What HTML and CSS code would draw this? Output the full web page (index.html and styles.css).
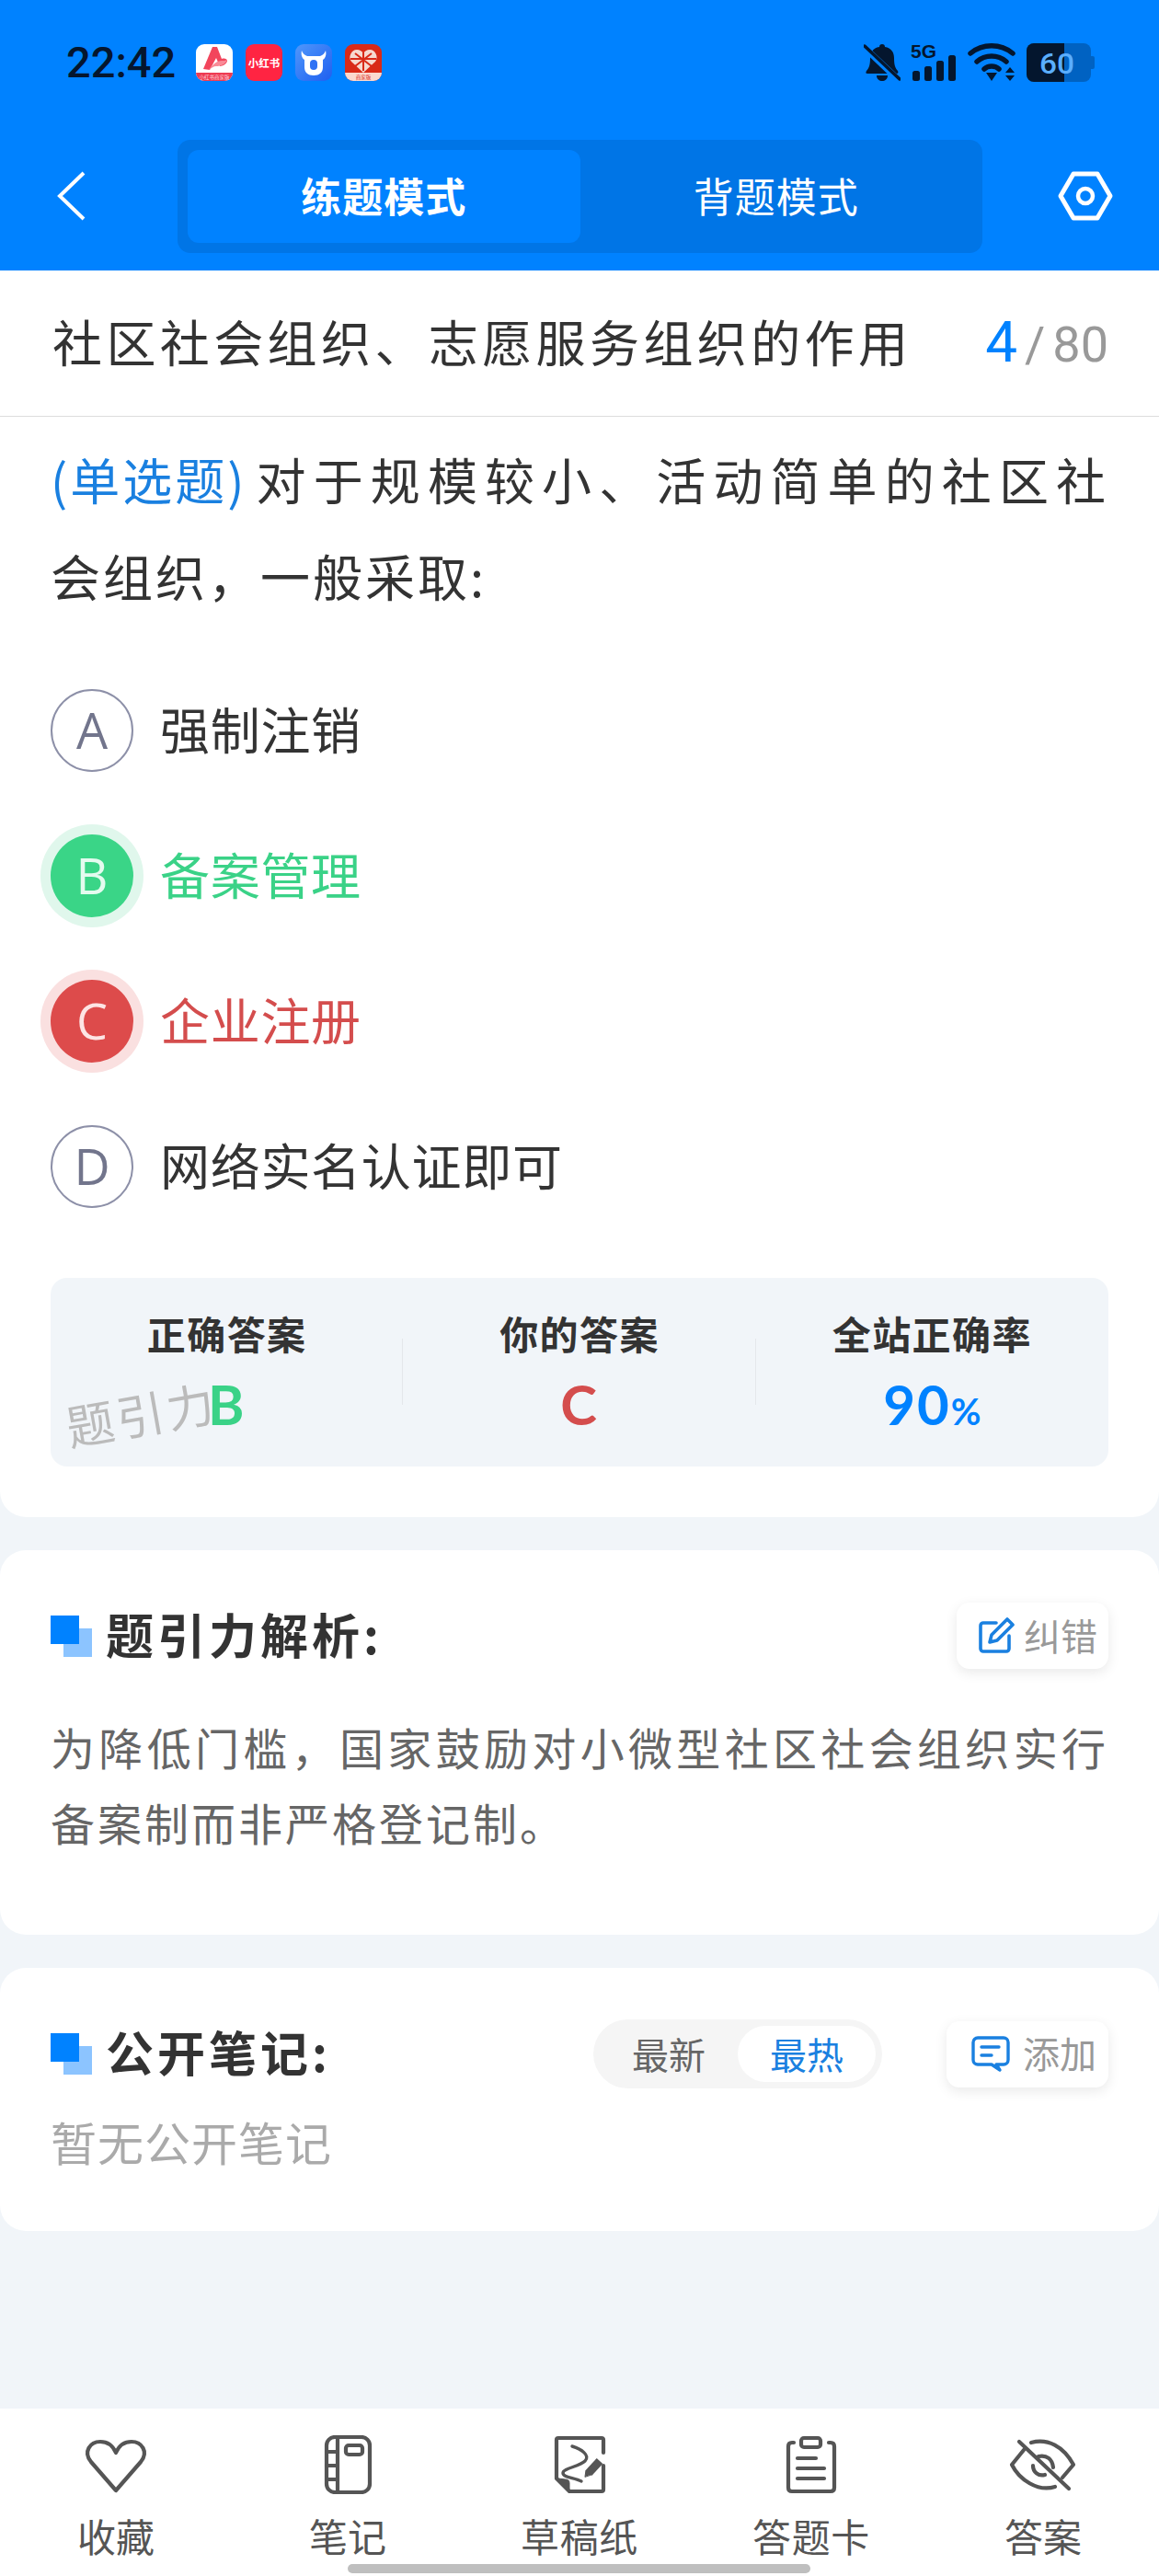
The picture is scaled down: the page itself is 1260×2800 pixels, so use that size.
FILE: index.html
```html
<!DOCTYPE html>
<html lang="zh-CN">

<head>
    <meta charset="UTF-8">
    <meta name="viewport" content="width=device-width, initial-scale=1.0">
    <title>题引力</title>
    <link rel="stylesheet" href="styles.css">
</head>

<body>
    <header class="topArea">
        <div class="statusBar">
            <div class="statusLeft">
                <span class="clock">22:42</span>
                <div class="appIcons">
                    <svg class="appIcon" viewBox="0 0 40 40">
                        <rect width="40" height="40" rx="9" fill="#fff"/>
                        <path d="M0 31H40a9 9 0 0 1-9 9H9a9 9 0 0 1-9-9Z" fill="#ee3b52"/>
                        <path d="M8 27 18 3h5l5 13c3-1 6 0 6 2 0 3-5 6-8 6l-4-9-7 13Z" fill="#f2455c"/>
                        <path d="M14 28c4-6 9-10 14-10 2 0 4 0 6-1-2 5-7 7-12 7-3 0-5 2-8 4Z" fill="#f98a96"/>
                        <text class="tinyText" x="20" y="37.5" fill="#ffd6dc">小红书商家版</text>
                    </svg>
                    <svg class="appIcon" viewBox="0 0 40 40">
                        <rect width="40" height="40" rx="9" fill="#ff2442"/>
                        <text class="brandText" x="20" y="25" fill="#fff">小红书</text>
                    </svg>
                    <svg class="appIcon" viewBox="0 0 40 40">
                        <defs>
                            <linearGradient id="cowBg" x1="0" y1="0" x2="1" y2="1">
                                <stop offset="0" stop-color="#4f97fb"/>
                                <stop offset="1" stop-color="#1f5ff0"/>
                            </linearGradient>
                        </defs>
                        <rect width="40" height="40" rx="9" fill="url(#cowBg)"/>
                        <path d="M7 7c1 3 3 5 6 6h14c3-1 5-3 6-6 1 4 0 8-3 10v8c0 6-4 9-10 9s-10-3-10-9v-8c-3-2-4-6-3-10Z" fill="#fff"/>
                        <rect x="16" y="17" width="8" height="11" rx="4" fill="#2f72f4"/>
                    </svg>
                    <svg class="appIcon" viewBox="0 0 40 40">
                        <rect width="40" height="40" rx="9" fill="#d92a18"/>
                        <path d="M20 31 7 19c-4-5 0-13 6-13 3 0 6 2 7 4 1-2 4-4 7-4 6 0 10 8 6 13Z" fill="#f6d9cf"/>
                        <path d="M20 9v20M11 10l18 14M29 10 11 24M6 16h28" stroke="#d92a18" stroke-width="2" fill="none"/>
                        <path d="M0 31H40a9 9 0 0 1-9 9H9a9 9 0 0 1-9-9Z" fill="#fbd9cf"/>
                        <text class="tinyText" x="20" y="38" fill="#d92a18">商家版</text>
                    </svg>
                </div>
            </div>
            <div class="statusRight">
                <svg class="statusBell" viewBox="0 0 40 42">
                    <path d="M20 1c2 0 3 1 3 3 7 1 10 6 10 12 0 7 1 11 4 14 1 2 0 3-1 3H4c-2 0-2-1-1-3 3-3 4-7 4-14 0-6 3-11 10-12 0-2 1-3 3-3Z" fill="#04162e"/>
                    <path d="M14 35h12c0 4-3 6-6 6s-6-2-6-6Z" fill="#04162e"/>
                    <path d="M0 4 39 41" stroke="#0082ff" stroke-width="7"/>
                    <path d="M1 3 39 39" stroke="#04162e" stroke-width="3.5" stroke-linecap="round"/>
                </svg>
                <svg class="statusSignal" viewBox="0 -6 50 48">
                    <text class="fiveG" x="0" y="16" textLength="28" lengthAdjust="spacingAndGlyphs">5G</text>
                    <rect x="2" y="30" width="8" height="11" rx="2.5" fill="#04162e"/>
                    <rect x="15" y="25" width="8" height="16" rx="2.5" fill="#04162e"/>
                    <rect x="28" y="19" width="8" height="22" rx="2.5" fill="#04162e"/>
                    <rect x="41" y="13" width="8" height="28" rx="2.5" fill="#04162e"/>
                </svg>
                <svg class="statusWifi" viewBox="0 0 52 42">
                    <path d="M3 11C16 0 36 0 49 11" stroke="#04162e" stroke-width="5.5" fill="none" stroke-linecap="round"/>
                    <path d="M10 20C19 12 33 12 42 20" stroke="#04162e" stroke-width="5.5" fill="none" stroke-linecap="round"/>
                    <path d="M18 28C22 24 30 24 34 28" stroke="#04162e" stroke-width="5.5" fill="none" stroke-linecap="round"/>
                    <path d="M20 32H32L26 41Z" fill="#04162e"/>
                    <path d="M41 32H51L46 26ZM41 35H51L46 41Z" fill="#04162e"/>
                </svg>
                <svg class="statusBattery" viewBox="0 0 74 42">
                    <rect x="0" y="0" width="70" height="42" rx="8" fill="#0062c2"/>
                    <path d="M8 0H41V42H8a8 8 0 0 1-8-8V8a8 8 0 0 1 8-8Z" fill="#04162e"/>
                    <path d="M70 14h2a2 2 0 0 1 2 2v10a2 2 0 0 1-2 2h-2Z" fill="#0062c2"/>
                    <text class="batteryText" x="33" y="33" textLength="38" lengthAdjust="spacingAndGlyphs">60</text>
                </svg>
            </div>
        </div>
        <nav class="navBar">
            <svg class="backIcon" viewBox="0 0 32 54">
                <path d="M29 2 3 27 29 52" stroke="#fff" stroke-width="4" fill="none"/>
            </svg>
            <div class="modeSwitch">
                <div class="modeTab modeActive">练题模式</div>
                <div class="modeTab">背题模式</div>
            </div>
            <svg class="hexIcon" viewBox="0 0 60 54">
                <path d="M3 27 17 3H43L57 27 43 51H17Z" stroke="#fff" stroke-width="5" fill="none" stroke-linejoin="round"/>
                <circle cx="30" cy="27" r="8" stroke="#fff" stroke-width="4.5" fill="none"/>
            </svg>
        </nav>
    </header>

    <main class="pageBody">
        <section class="card questionCard">
            <div class="topicRow">
                <h1 class="topicTitle">社区社会组织、志愿服务组织的作用</h1>
                <div class="counter"><span class="counterNow">4</span><span class="counterSlash">/</span><span class="counterAll">80</span></div>
            </div>
            <div class="questionBox">
                <p class="questionText">
                    <span class="lineFull"><span class="qType">(单选题)</span>对于规模较小、活动简单的社区社</span>
                    <span class="lineLast">会组织，一般采取:</span>
                </p>
                <ul class="optionList">
                    <li class="option"><span class="optionMark">A</span><span class="optionText">强制注销</span></li>
                    <li class="option optionRight"><span class="optionMark">B</span><span class="optionText">备案管理</span></li>
                    <li class="option optionWrong"><span class="optionMark">C</span><span class="optionText">企业注册</span></li>
                    <li class="option"><span class="optionMark">D</span><span class="optionText">网络实名认证即可</span></li>
                </ul>
                <div class="statsBox">
                    <div class="statCell">
                        <div class="statLabel">正确答案</div>
                        <div class="statValue valueRight">B</div>
                    </div>
                    <div class="statLine"></div>
                    <div class="statCell">
                        <div class="statLabel">你的答案</div>
                        <div class="statValue valueWrong">C</div>
                    </div>
                    <div class="statLine"></div>
                    <div class="statCell">
                        <div class="statLabel">全站正确率</div>
                        <div class="statValue valueRate">90<small>%</small></div>
                    </div>
                    <div class="watermark">题引力</div>
                </div>
            </div>
        </section>

        <section class="card analysisCard">
            <div class="cardHead">
                <svg class="headMark" viewBox="0 0 45 45">
                    <rect x="14" y="14" width="31" height="31" fill="#8cc4ff"/>
                    <rect width="31" height="31" fill="#0082ff"/>
                </svg>
                <h2 class="headTitle">题引力解析:</h2>
                <button class="smallBtn">
                    <svg class="btnIcon" viewBox="0 0 40 40">
                        <path d="M20 6H6a3 3 0 0 0-3 3v25a3 3 0 0 0 3 3h25a3 3 0 0 0 3-3V20" stroke="#1a80e0" stroke-width="3.6" fill="none" stroke-linecap="round"/>
                        <path d="M13 27l2-8L32 2l6 6-17 17Z" stroke="#1a80e0" stroke-width="3.6" fill="none" stroke-linejoin="round"/>
                    </svg>
                    <span class="btnText">纠错</span>
                </button>
            </div>
            <p class="analysisText">为降低门槛，国家鼓励对小微型社区社会组织实行备案制而非严格登记制。</p>
        </section>

        <section class="card notesCard">
            <div class="cardHead notesHead">
                <svg class="headMark" viewBox="0 0 45 45">
                    <rect x="14" y="14" width="31" height="31" fill="#8cc4ff"/>
                    <rect width="31" height="31" fill="#0082ff"/>
                </svg>
                <h2 class="headTitle">公开笔记:</h2>
                <div class="sortPill">
                    <span class="sortItem">最新</span>
                    <span class="sortItem sortActive">最热</span>
                </div>
                <button class="smallBtn addBtn">
                    <svg class="btnIcon" viewBox="0 0 42 40">
                        <path d="M7 2H35a5 5 0 0 1 5 5V26a5 5 0 0 1-5 5H30L27 31 31 37 22 31H7a5 5 0 0 1-5-5V7a5 5 0 0 1 5-5Z" stroke="#1a80e0" stroke-width="3.4" fill="none" stroke-linejoin="round"/>
                        <path d="M11 12H30M11 21H22" stroke="#1a80e0" stroke-width="3.4" stroke-linecap="round"/>
                    </svg>
                    <span class="btnText">添加</span>
                </button>
            </div>
            <p class="emptyNote">暂无公开笔记</p>
        </section>
    </main>

    <footer class="bottomBar">
        <div class="barItem">
            <svg class="barIcon" viewBox="0 0 80 64">
                <path d="M40 60 13 29C4 18 12 7 23 7 31 7 37 12 40 19 43 12 49 7 57 7 68 7 76 18 67 29Z"/>
            </svg>
            <span>收藏</span>
        </div>
        <div class="barItem">
            <svg class="barIcon" viewBox="0 0 80 64">
                <rect x="17" y="2" width="47" height="60" rx="9"/>
                <path d="M29 2V62M17 18H29M17 33H29M17 48H29"/>
                <rect x="38" y="11" width="18" height="10" rx="3"/>
            </svg>
            <span>笔记</span>
        </div>
        <div class="barItem">
            <svg class="barIcon" viewBox="0 0 80 64">
                <path d="M66 19V5Q66 3 64 3H17Q15 3 15 5V47L29 61H64Q66 61 66 59V33"/>
                <path class="iconFill" d="M15 47 29 61V52Q29 48 25 48Z"/>
                <path class="thinLine" d="M32 12C42 15 52 22 46 28 40 34 22 36 22 41 22 46 34 46 42 50"/>
                <path class="penBody" d="M50 41 62 28"/>
                <path class="iconFill" d="M46 45 47 38 52 43Z"/>
            </svg>
            <span class="spacedLabel">草稿纸</span>
        </div>
        <div class="barItem">
            <svg class="barIcon" viewBox="0 0 80 64">
                <path d="M21 8H19Q15 8 15 12V57Q15 61 19 61H61Q65 61 65 57V12Q65 8 61 8H59"/>
                <rect x="29" y="3" width="21" height="10" rx="3"/>
                <path d="M25 25H45M25 36H54M25 47H54"/>
            </svg>
            <span class="spacedLabel">答题卡</span>
        </div>
        <div class="barItem">
            <svg class="barIcon" viewBox="0 0 80 64">
                <path d="M14 7 68 58"/>
                <path d="M27 8C45 3 62 12 73 32L61 46"/>
                <path d="M19 16 6 32C14 48 34 62 53 56"/>
                <path d="M35 23C44 21 50 26 51 35"/>
                <path d="M29 33C29 40 35 45 42 43"/>
            </svg>
            <span>答案</span>
        </div>
        <div class="homeBar"></div>
    </footer>
</body>

</html>
```

FILE: styles.css
```css
* {
    margin: 0;
    padding: 0;
    box-sizing: border-box;
}

body {
    width: 1260px;
    height: 2800px;
    background-color: #f1f5f9;
    font-family: "Noto Sans CJK SC", "Noto Sans", sans-serif;
    color: #333;
    display: flex;
    flex-direction: column;
    overflow: hidden;
}

/* topo azul */
.topArea {
    background-color: #0082ff;
    height: 294px;
}

.statusBar {
    height: 136px;
    display: flex;
    align-items: center;
    justify-content: space-between;
    padding: 0 70px 0 72px;
}

.statusLeft {
    display: flex;
    align-items: center;
}

.clock {
    font-family: Roboto, "Liberation Sans", sans-serif;
    font-size: 47px;
    font-weight: 500;
    line-height: 50px;
    color: #05162e;
    width: 141px;
}

.appIcons {
    display: flex;
    gap: 14px;
}

.appIcon {
    width: 40px;
    height: 40px;
}

.tinyText {
    font-size: 5.5px;
    text-anchor: middle;
}

.brandText {
    font-size: 11.5px;
    font-weight: 700;
    text-anchor: middle;
}

.statusRight {
    display: flex;
    align-items: center;
}

.statusBell {
    width: 40px;
    height: 42px;
    margin-right: 11px;
}

.statusSignal {
    width: 50px;
    height: 48px;
    margin: -6px 12px 0 0;
}

.statusWifi {
    width: 52px;
    height: 42px;
    margin-right: 12px;
}

.statusBattery {
    width: 74px;
    height: 42px;
}

.fiveG {
    font-family: "Liberation Sans", sans-serif;
    font-size: 20px;
    font-weight: 700;
    fill: #04162e;
}

.batteryText {
    font-family: Roboto, "Liberation Sans", sans-serif;
    font-size: 32px;
    font-weight: 500;
    text-anchor: middle;
    fill: #5aaeff;
}

.navBar {
    height: 158px;
    padding-top: 16px;
    display: grid;
    grid-template-columns: 193px 875px 192px;
    align-items: start;
}

.backIcon {
    width: 32px;
    height: 54px;
    margin: 34px 0 0 62px;
}

.hexIcon {
    width: 60px;
    height: 54px;
    margin: 34px 0 0 82px;
}

.modeSwitch {
    height: 123px;
    padding: 11px;
    background-color: #0075e6;
    border-radius: 14px;
    display: flex;
}

.modeTab {
    flex: 1;
    color: #fff;
    font-size: 44px;
    letter-spacing: 1px;
    line-height: 99px;
    text-align: center;
    border-radius: 12px;
}

.modeActive {
    background-color: #0082ff;
    font-weight: 700;
}

/* cards */
.pageBody {
    flex: 1;
    display: flex;
    flex-direction: column;
    gap: 36px;
}

.card {
    background-color: #fff;
    border-radius: 28px;
}

.questionCard {
    border-radius: 0 0 28px 28px;
    padding-bottom: 55px;
}

.topicRow {
    height: 159px;
    padding: 0 55px 0 57px;
    border-bottom: 1px solid #dcdcdc;
    display: flex;
    align-items: center;
    justify-content: space-between;
}

.topicTitle {
    font-size: 54px;
    font-weight: 400;
    letter-spacing: 4.4px;
    line-height: 70px;
    margin-bottom: 4px;
}

.counter {
    font-family: Roboto, "Liberation Sans", sans-serif;
    display: flex;
    align-items: baseline;
    color: #999;
    font-size: 54px;
    margin-bottom: 3px;
}

.counterNow {
    color: #0082ff;
    font-size: 62px;
}

.counterSlash {
    margin: 0 8px;
}

.questionBox {
    padding: 15px 55px 0;
}

.questionText {
    font-size: 54px;
    letter-spacing: 3px;
    line-height: 105px;
}

.lineFull {
    display: block;
    text-align: justify;
    text-align-last: justify;
}

.lineLast {
    display: block;
}

.qType {
    display: inline-block;
    color: #1a80e0;
    margin-right: 5px;
}

.optionList {
    list-style: none;
    margin-top: 37px;
}

.option {
    height: 158px;
    display: flex;
    align-items: center;
    font-size: 54px;
}

.optionText {
    letter-spacing: 0.7px;
    margin-bottom: 6px;
}

.optionMark {
    width: 90px;
    height: 90px;
    border-radius: 50%;
    border: 2px solid #8d90a8;
    color: #72758c;
    font-family: "Open Sans", sans-serif;
    font-size: 54px;
    font-weight: 400;
    line-height: 84px;
    text-align: center;
    margin-right: 29px;
}

.optionRight {
    color: #3ad287;
}

.optionRight .optionMark {
    background-color: #3ad587;
    border: none;
    color: #e4fbef;
    line-height: 88px;
    box-shadow: 0 0 0 11px #e0f7ec;
}

.optionWrong {
    color: #d44d4d;
}

.optionWrong .optionMark {
    background-color: #dd4b4b;
    border: none;
    color: #fde4e4;
    line-height: 88px;
    box-shadow: 0 0 0 11px #fae0e0;
}

.statsBox {
    position: relative;
    margin-top: 42px;
    height: 205px;
    padding-top: 35px;
    background-color: #f1f5f9;
    border-radius: 18px;
    display: flex;
}

.statCell {
    flex: 1;
    text-align: center;
}

.statLine {
    width: 1px;
    height: 72px;
    margin: 31px 0 0 -1px;
    background-color: #e4e7eb;
}

.statLabel {
    font-size: 42px;
    font-weight: 700;
    letter-spacing: 1.4px;
    line-height: 50px;
}

.statValue {
    margin-top: 17px;
    font-family: Lato, "Liberation Sans", sans-serif;
    font-size: 60px;
    font-weight: 700;
    letter-spacing: 2px;
    line-height: 70px;
}

.statValue small {
    font-size: 40px;
    letter-spacing: 0;
}

.valueRight {
    color: #3ad287;
}

.valueWrong {
    color: #d44d4d;
}

.valueRate {
    color: #0082ff;
}

.watermark {
    position: absolute;
    left: 16px;
    top: 117px;
    color: #bbb;
    font-size: 52px;
    letter-spacing: 3px;
    line-height: 60px;
    transform: rotate(-10deg);
}

.analysisCard {
    height: 418px;
    padding: 57px 55px 0;
}

.notesCard {
    height: 286px;
    padding: 56px 55px 0;
}

.cardHead {
    height: 72px;
    display: flex;
    align-items: center;
}

.notesHead {
    height: 75px;
}

.headMark {
    width: 45px;
    height: 45px;
    margin-right: 15px;
}

.headTitle {
    flex: 1;
    font-size: 52px;
    font-weight: 700;
    letter-spacing: 4px;
    line-height: 72px;
    margin-bottom: 5px;
}

.smallBtn {
    height: 72px;
    padding: 0 12px 0 23px;
    border: none;
    border-radius: 14px;
    background-color: #fff;
    box-shadow: 0 4px 14px rgba(0, 0, 0, 0.09);
    color: #999;
    font-family: inherit;
    font-size: 40px;
    display: flex;
    align-items: center;
    gap: 10px;
}

.btnText {
    margin-bottom: 3px;
}

.addBtn {
    padding: 0 13px 0 27px;
    gap: 14px;
}

.btnIcon {
    width: 40px;
    height: 40px;
}

.addBtn .btnIcon {
    width: 42px;
}

.sortPill {
    width: 314px;
    height: 75px;
    padding: 7px;
    margin-right: 70px;
    background-color: #f5f5f5;
    border-radius: 38px;
    display: flex;
}

.sortItem {
    flex: 1;
    color: #666;
    font-size: 40px;
    line-height: 61px;
    text-align: center;
    border-radius: 31px;
}

.sortActive {
    background-color: #fff;
    color: #1a80e0;
}

.analysisText {
    margin-top: 43px;
    color: #666;
    font-size: 48px;
    letter-spacing: 3px;
    line-height: 82px;
    text-align: justify;
}

.emptyNote {
    margin-top: 27px;
    color: #aaa;
    font-size: 50px;
    letter-spacing: 1px;
    line-height: 60px;
}

/* barra de baixo */
.bottomBar {
    position: relative;
    height: 182px;
    padding-top: 29px;
    background-color: #fff;
    display: flex;
}

.barItem {
    flex: 1;
    display: flex;
    flex-direction: column;
    align-items: center;
    color: #555;
    font-size: 42px;
    line-height: 50px;
}

.spacedLabel {
    letter-spacing: 0.7px;
}

.barIcon {
    width: 80px;
    height: 64px;
    margin-bottom: 20px;
    fill: none;
    stroke: #555;
    stroke-width: 4.2;
    stroke-linecap: round;
    stroke-linejoin: round;
}

.iconFill {
    fill: #555;
    stroke-width: 1;
}

.thinLine {
    stroke-width: 3.4;
}

.penBody {
    stroke-width: 9;
    stroke-linecap: butt;
}

.homeBar {
    position: absolute;
    left: 378px;
    top: 169px;
    width: 503px;
    height: 10px;
    border-radius: 5px;
    background-color: #bfbfbf;
}
```
